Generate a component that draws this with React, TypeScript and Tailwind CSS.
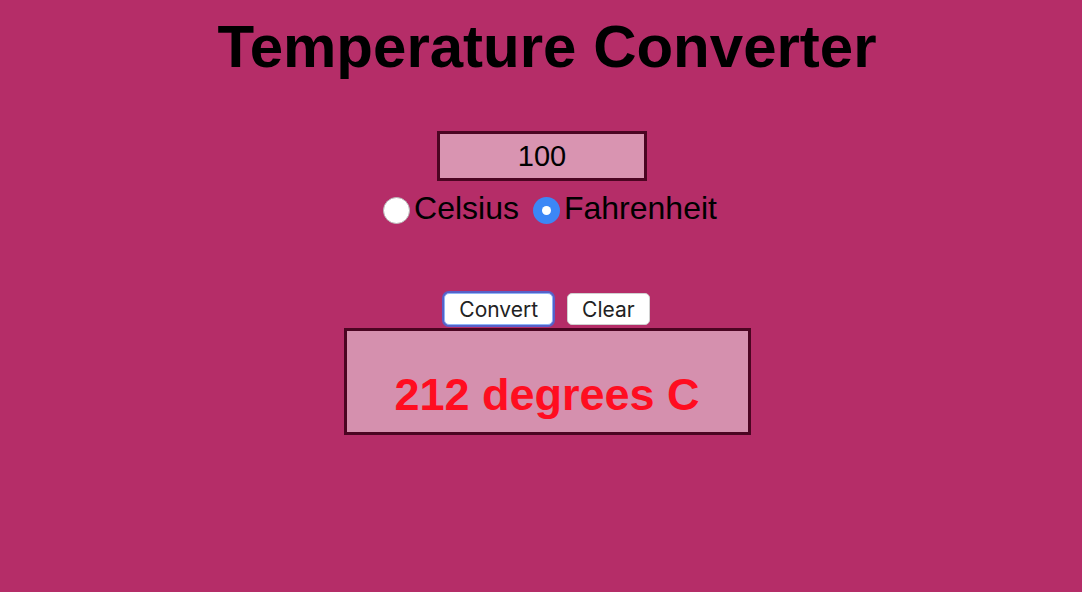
import { useState } from 'react';

export default function App() {
  const [value, setValue] = useState('100');
  const [unit, setUnit] = useState<'C' | 'F'>('F');

  return (
    <div className="min-h-screen w-full bg-[#b52d68] flex flex-col items-center pl-3 font-['Liberation_Sans',Arial,sans-serif] text-black">
      {/* Title */}
      <h1 className="mt-[11px] text-[60px] leading-[72px] font-bold">Temperature Converter</h1>

      {/* Input */}
      <input
        value={value}
        onChange={(e) => setValue(e.target.value)}
        className="mt-[48px] mr-[10px] w-[210px] h-[50px] border-[3px] border-[#4b0522] bg-[#d994b1] text-center text-[29px] outline-none"
      />

      {/* Unit radios */}
      <div className="mt-[9px] ml-[6px] flex items-center text-[32px] leading-[36px]">
        <label className="flex items-center cursor-pointer" onClick={() => setUnit('C')}>
          <span
            className={
              unit === 'C'
                ? 'w-[27px] h-[27px] mt-[4px] rounded-full bg-[#3c87f6] flex items-center justify-center'
                : 'w-[27px] h-[27px] mt-[4px] rounded-full bg-white border border-[#b8b8b8]'
            }
          >
            {unit === 'C' && <span className="w-[9px] h-[9px] rounded-full bg-white" />}
          </span>
          <span className="ml-[4px]">Celsius</span>
        </label>
        <label className="flex items-center cursor-pointer ml-[14px]" onClick={() => setUnit('F')}>
          <span
            className={
              unit === 'F'
                ? 'w-[27px] h-[27px] mt-[4px] rounded-full bg-[#3c87f6] flex items-center justify-center'
                : 'w-[27px] h-[27px] mt-[4px] rounded-full bg-white border border-[#b8b8b8]'
            }
          >
            {unit === 'F' && <span className="w-[9px] h-[9px] rounded-full bg-white" />}
          </span>
          <span className="ml-[4px]">Fahrenheit</span>
        </label>
      </div>

      {/* Buttons */}
      <div className="mt-[67px] flex items-center gap-[14px] font-['Inter',sans-serif] text-[21px] text-[#222]">
        <button className="h-[32px] px-[14px] bg-white rounded-[5px] border border-[#8fb4f5] ring-2 ring-[#5661c9] leading-none">
          Convert
        </button>
        <button className="h-[32px] px-[14px] bg-white rounded-[5px] border border-[#d0d0d0] leading-none">
          Clear
        </button>
      </div>

      {/* Result */}
      <div className="mt-[3px] w-[407px] h-[107px] border-[3px] border-[#4b0522] bg-[#d590ae] flex justify-center pt-[38px]">
        <p className="text-[45px] leading-[52px] font-bold text-[#ff0d20]">212 degrees C</p>
      </div>
    </div>
  );
}
